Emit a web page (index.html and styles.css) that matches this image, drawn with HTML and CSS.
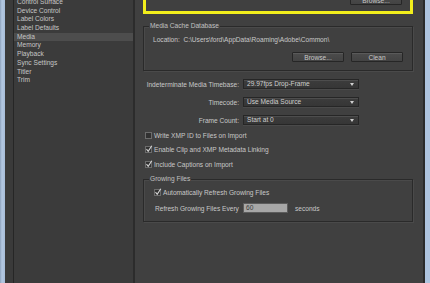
FILE: index.html
```html
<!DOCTYPE html>
<html lang="en">
<head>
    <meta charset="UTF-8">
    <title>Preferences - Media</title>
    <link rel="stylesheet" href="styles.css">
</head>
<body>
    <div class="window">
        <div class="frame-left"></div>
        <div class="gutter"></div>
        <ul class="sidebar">
            <li>Control Surface</li>
            <li>Device Control</li>
            <li>Label Colors</li>
            <li>Label Defaults</li>
            <li class="selected">Media</li>
            <li>Memory</li>
            <li>Playback</li>
            <li>Sync Settings</li>
            <li>Titler</li>
            <li>Trim</li>
        </ul>
        <div class="main">
            <div class="highlight">
                <button class="btn">Browse...</button>
            </div>

            <div class="group cache">
                <div class="group-title">Media Cache Database</div>
                <div class="location">Location:&nbsp; C:\Users\ford\AppData\Roaming\Adobe\Common\</div>
                <div class="btn-row">
                    <button class="btn">Browse...</button>
                    <button class="btn">Clean</button>
                </div>
            </div>

            <div class="form-grid">
                <label>Indeterminate Media Timebase:</label>
                <div class="select">29.97fps Drop-Frame<span class="arrow"></span></div>
                <label>Timecode:</label>
                <div class="select">Use Media Source<span class="arrow"></span></div>
                <label>Frame Count:</label>
                <div class="select">Start at 0<span class="arrow"></span></div>
            </div>

            <div class="checks">
                <div class="check"><span class="box"></span>Write XMP ID to Files on Import</div>
                <div class="check"><span class="box"><svg viewBox="0 0 8 8" width="8" height="8"><path d="M1.5 4.2 L3.2 6.3 L6.8 0.8" fill="none" stroke="#d6d6d6" stroke-width="1.1"/></svg></span>Enable Clip and XMP Metadata Linking</div>
                <div class="check"><span class="box"><svg viewBox="0 0 8 8" width="8" height="8"><path d="M1.5 4.2 L3.2 6.3 L6.8 0.8" fill="none" stroke="#d6d6d6" stroke-width="1.1"/></svg></span>Include Captions on Import</div>
            </div>

            <div class="group growing">
                <div class="group-title">Growing Files</div>
                <div class="check"><span class="box"><svg viewBox="0 0 8 8" width="8" height="8"><path d="M1.5 4.2 L3.2 6.3 L6.8 0.8" fill="none" stroke="#d6d6d6" stroke-width="1.1"/></svg></span>Automatically Refresh Growing Files</div>
                <div class="refresh">
                    <span class="refresh-label">Refresh Growing Files Every</span>
                    <span class="field">60</span>
                    <span>seconds</span>
                </div>
            </div>
        </div>
        <div class="frame-right"></div>
    </div>
</body>
</html>
```

FILE: styles.css
```css
* { box-sizing: border-box; }
html, body { margin: 0; padding: 0; height: 100%; overflow: hidden; }
body { font-family: "Liberation Sans", Arial, sans-serif; font-size: 6.6px; color: #c8c8c8; background: #3f3f3f; }

.window { display: flex; height: 283px; }
.frame-left { width: 5px; background: linear-gradient(to right, #8ea3bd, #b3c8e2 40%, #a7bdd8); }
.gutter { width: 9px; background: #3a3a3a; border-right: 1px solid #262626; }
.frame-right { width: 7px; background: #aec4df; border-left: 2px solid #2a2a2a; }

.sidebar { list-style: none; margin: -2px 0 0; padding: 0; width: 121px; background: #3b3b3b; border-right: 2px solid #2c2c2c; }
.sidebar li { height: 8.7px; line-height: 8.7px; padding-left: 3px; color: #c6c6c6; }
.sidebar li.selected { background: #4d4d4d; }

.main { flex: 1; padding: 0 10px 0 8px; background: #404040; }

.highlight { margin-top: -12px; height: 26px; border: 3px solid #f2ee1c; display: flex; justify-content: flex-end; align-items: flex-end; padding: 0 8px 6px 0; }

.btn { font: inherit; color: #c8c8c8; height: 10px; width: 52px; padding: 0; background: linear-gradient(#4c4c4c, #434343); border: 1px solid #262626; box-shadow: inset 0 1px 0 #5a5a5a; border-radius: 1px; }

.group { border: 1px solid #2a2a2a; box-shadow: 1px 1px 0 #4a4a4a, inset 1px 1px 0 #4a4a4a; }
.group-title { width: fit-content; margin: -5px 0 0 -4px; padding: 0 1px; line-height: 8px; height: 8px; background: #404040; color: #c0c0c0; }

.cache { margin-top: 12px; padding: 0 9px 8px 9px; }
.location { margin-top: 6px; line-height: 8px; }
.btn-row { display: flex; justify-content: flex-end; gap: 7px; margin-top: 8px; }

.form-grid { display: grid; grid-template-columns: 96px 116px; column-gap: 4px; row-gap: 8px; margin-top: 8px; align-items: center; }
.form-grid label { text-align: right; }
.select { position: relative; height: 10px; line-height: 8px; padding-left: 3px; background: linear-gradient(#3c3c3c, #363636); border: 1px solid #262626; box-shadow: inset 0 1px 0 #4d4d4d, 0 1px 0 #4a4a4a; color: #cfcfcf; }
.arrow { position: absolute; right: 4px; top: 3px; border-left: 2.5px solid transparent; border-right: 2.5px solid transparent; border-top: 3px solid #d0d0d0; }

.checks { display: flex; flex-direction: column; gap: 5.5px; margin-top: 5.5px; padding-left: 2px; }
.check { display: flex; align-items: center; height: 9px; line-height: 9px; }
.box { position: relative; width: 7px; height: 7px; margin-right: 2px; background: #313131; border: 1px solid #6c6c6c; flex: none; }
.box svg { position: absolute; left: -1px; top: -2px; }

.growing { margin-top: 10.5px; padding: 0 9px 8px 10px; }
.growing .group-title { margin-left: -5px; }
.growing .check { margin-top: 4.5px; }
.refresh { display: flex; align-items: center; height: 10px; margin-top: 6.5px; padding-left: 1px; }
.refresh-label { width: 88px; }
.field { width: 45px; height: 10px; line-height: 8px; padding-left: 2px; background: #a7a7a7; border: 1px solid #5c5c5c; color: #3a3a3a; margin-right: 7px; }
```
